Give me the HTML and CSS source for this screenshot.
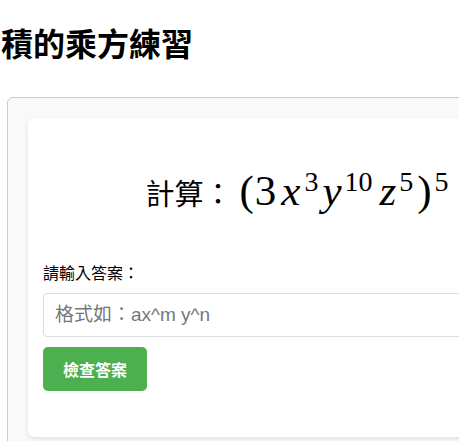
FILE: index.html
```html
<!DOCTYPE html>
<html lang="zh-Hant">
<head>
<meta charset="utf-8">
<title>積的乘方練習</title>
<link rel="stylesheet" href="styles.css">
</head>
<body>
<h1 class="title">積的乘方練習</h1>
<div class="outer">
  <div class="card">
    <div class="question">
      <span class="q-label">計算：</span><span class="math"><span class="paren po">(</span><span class="num">3</span><span class="var vx">x</span><sup class="sup s3">3</sup><span class="var vy">y</span><sup class="sup s10">10</sup><span class="var vz">z</span><sup class="sup s5">5</sup><span class="paren pc">)</span><sup class="sup s5b">5</sup></span>
    </div>
    <label class="answer-label" for="answer">請輸入答案：</label>
    <input class="answer-input" id="answer" type="text" placeholder="格式如：ax^m y^n">
    <button class="check-btn" type="button">檢查答案</button>
  </div>
</div>
</body>
</html>
```

FILE: styles.css
```css
html, body {
  margin: 0;
  padding: 0;
  background: #fff;
}
body {
  font-family: "Noto Sans CJK TC", "Noto Sans", sans-serif;
  color: #000;
}
.title {
  font-size: 32px;
  font-weight: bold;
  margin: 19px 0 32px 1px;
  line-height: normal;
}
.outer {
  margin-left: 7px;
  width: 580px;
  box-sizing: border-box;
  border: 1px solid #ccc;
  border-radius: 6px;
  background: #f9f9f9;
  padding: 20px;
}
.card {
  background: #fff;
  border-radius: 6px;
  box-shadow: 0 2px 5px rgba(0, 0, 0, 0.1);
  padding: 15px 15px 46px;
  display: flex;
  flex-direction: column;
  align-items: flex-start;
}
.question {
  align-self: stretch;
  text-align: center;
  font-size: 29px;
  line-height: 40px;
  margin: 39px 0 49px;
  white-space: nowrap;
}
.math {
  font-family: "Liberation Serif", serif;
  font-size: 43px;
  line-height: 0;
}
.num { font-style: normal; margin-right: 1px; }
.var { font-style: italic; }
.paren { font-style: normal; }
.po { margin-left: 7px; margin-right: 1px; }
.pc { margin-left: 3px; }
.vx { margin-left: 4px; margin-right: 4px; }
.vy { margin-left: 4px; margin-right: 3px; }
.vz { margin-left: 4px; margin-right: 3px; }
.sup {
  font-size: 28px;
  line-height: 0;
  vertical-align: 14px;
  font-style: normal;
}
.s10 { margin-right: 3px; }
.s5 { margin-right: 1px; }
.s5b { margin-left: 3px; }
.answer-label {
  font-size: 16px;
  line-height: 23px;
  margin-bottom: 9px;
}
.answer-input {
  align-self: stretch;
  box-sizing: border-box;
  height: 44px;
  padding: 10px 11px;
  font-family: "Liberation Sans", "Noto Sans CJK TC", sans-serif;
  font-size: 19px;
  border: 1px solid #ddd;
  border-radius: 4px;
  margin: 0 0 10px;
  color: #333;
}
.answer-input::placeholder {
  color: #777;
}
.check-btn {
  background: #4caf50;
  color: #fff;
  border: none;
  border-radius: 5px;
  height: 44px;
  padding: 0 20px;
  font-family: "Noto Sans CJK TC", sans-serif;
  font-size: 16px;
  font-weight: bold;
}
```
